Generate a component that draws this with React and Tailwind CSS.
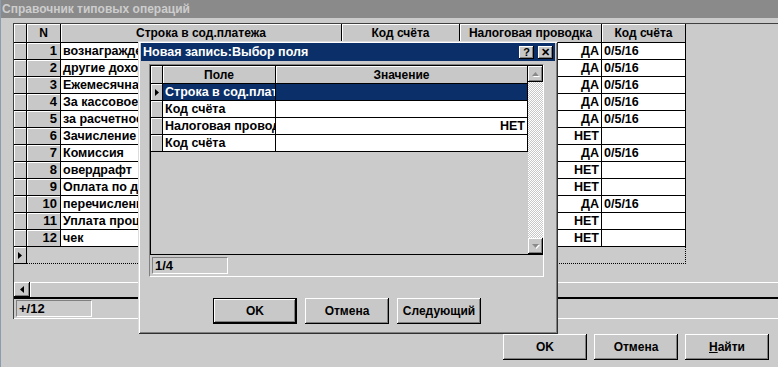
import React from "react";

const rows = [
  ["вознаграждение", "ДА", "0/5/16"],
  ["другие доходы", "ДА", "0/5/16"],
  ["Ежемесячная плата", "ДА", "0/5/16"],
  ["За кассовое обслуживание", "ДА", "0/5/16"],
  ["за расчетное обслуживание", "ДА", "0/5/16"],
  ["Зачисление процентов", "НЕТ", ""],
  ["Комиссия", "ДА", "0/5/16"],
  ["овердрафт", "НЕТ", ""],
  ["Оплата по договору", "НЕТ", ""],
  ["перечисление", "ДА", "0/5/16"],
  ["Уплата процентов", "НЕТ", ""],
  ["чек", "НЕТ", ""],
];

const drows = [
  ["Строка в сод.платежа", ""],
  ["Код счёта", ""],
  ["Налоговая проводка", "НЕТ"],
  ["Код счёта", ""],
];

const raised =
  "shadow-[inset_-1px_-1px_0_#000,inset_1px_1px_0_#fff,inset_-2px_-2px_0_#808080]";

function TriRight() {
  return (
    <svg width="4" height="7" viewBox="0 0 4 7">
      <polygon points="0,0 4,3.5 0,7" fill="#000" />
    </svg>
  );
}

function TriLeft() {
  return (
    <svg width="4" height="7" viewBox="0 0 4 7">
      <polygon points="4,0 0,3.5 4,7" fill="#000" />
    </svg>
  );
}

function TriUpGray() {
  return (
    <svg width="9" height="6" viewBox="0 0 9 6">
      <polygon points="1,5 4.5,1 8,5" fill="#ffffff" transform="translate(1,1)" />
      <polygon points="1,5 4.5,1 8,5" fill="#8a8a8a" />
    </svg>
  );
}

function TriDownGray() {
  return (
    <svg width="9" height="6" viewBox="0 0 9 6">
      <polygon points="1,1 4.5,5 8,1" fill="#ffffff" transform="translate(1,1)" />
      <polygon points="1,1 4.5,5 8,1" fill="#8a8a8a" />
    </svg>
  );
}

const grayCell =
  "bg-[#c8c8c8] border-r border-b border-black shadow-[inset_1px_1px_0_#fff]";
const whiteCell = "bg-white border-r border-b border-black";

function Button({ children, def = false, className = "" }) {
  if (def) {
    return (
      <div className={`border border-black ${className}`}>
        <div
          className={`w-full h-full bg-[#c8c8c8] ${raised} flex items-center justify-center`}
        >
          {children}
        </div>
      </div>
    );
  }
  return (
    <div
      className={`bg-[#c8c8c8] ${raised} flex items-center justify-center ${className}`}
    >
      {children}
    </div>
  );
}

function Dialog() {
  return (
    <div className="absolute left-[137px] top-[41px] w-[420px] h-[293px] bg-[#cbcbcb] shadow-[inset_1px_1px_0_#dcdcdc,inset_-1px_-1px_0_#303030,inset_2px_2px_0_#fff,inset_-2px_-2px_0_#808080] pt-[2px] px-[3px] flex flex-col">
      {/* title */}
      <div className="h-[18px] bg-[#0b2f68] flex items-center pl-[2px] pr-[2px] text-white">
        <span className="flex-1 leading-[18px] text-[12.5px]">Новая запись:Выбор поля</span>
        <div className={`w-[15px] h-[13px] bg-[#c8c8c8] ${raised} flex items-center justify-center text-black text-[11px] leading-none`}>
          ?
        </div>
        <div className={`ml-[4px] w-[15px] h-[13px] bg-[#c8c8c8] ${raised} flex items-center justify-center text-black text-[11px] leading-none`}>
          ✕
        </div>
      </div>

      {/* panel */}
      <div className="mt-[3px] ml-[8px] w-[395px] h-[213px] border border-t-[#808080] border-l-[#808080] border-b-white border-r-white flex flex-col">
        <div className="h-[190px] border-t border-l border-b border-black flex">
          <div className="w-[377px] flex flex-col">
            {/* header */}
            <div className="flex h-[18px]">
              <div className={`w-[12px] ${grayCell}`} />
              <div className={`w-[113px] ${grayCell} flex items-center justify-center`}>
                Поле
              </div>
              <div className={`w-[252px] ${grayCell} flex items-center justify-center`}>
                Значение
              </div>
            </div>
            {drows.map((r, i) => (
              <div key={i} className="flex h-[17px]">
                <div className={`w-[12px] ${grayCell} flex items-center justify-center`}>
                  {i === 0 ? <TriRight /> : null}
                </div>
                <div
                  className={`w-[113px] border-r border-b border-black pl-[2px] overflow-hidden whitespace-nowrap leading-[16px] text-[12.5px] ${
                    i === 0 ? "bg-[#0b2f68] text-white" : "bg-white"
                  }`}
                >
                  {r[0]}
                </div>
                <div
                  className={`w-[252px] border-r border-b border-black pr-[2px] text-right leading-[16px] text-[12.5px] ${
                    i === 0 ? "bg-[#0b2f68] text-white" : "bg-white"
                  }`}
                >
                  {r[1]}
                </div>
              </div>
            ))}
          </div>
          {/* vertical scrollbar */}
          <div className="w-[15px] flex flex-col">
            <div className={`h-[16px] bg-[#c8c8c8] ${raised} flex items-center justify-center`}>
              <TriUpGray />
            </div>
            <div className="flex-1 bg-[image:repeating-conic-gradient(#c8c8c8_0_25%,#ffffff_0_50%)] bg-[length:2px_2px]" />
            <div className={`h-[16px] bg-[#c8c8c8] ${raised} flex items-center justify-center`}>
              <TriDownGray />
            </div>
          </div>
        </div>
        <div className="flex-1 pt-[2px] pl-[2px]">
          <div className="w-[76px] h-[17px] border border-t-[#808080] border-l-[#808080] border-b-white border-r-white pl-[2px] leading-[15px] text-[13px]">
            1/4
          </div>
        </div>
      </div>

      {/* buttons */}
      <div className="mt-[21px] flex justify-center gap-[8px] pr-[2px]">
        <Button def className="w-[84px] h-[26px]">OK</Button>
        <Button className="w-[84px] h-[26px]">Отмена</Button>
        <Button className="w-[84px] h-[26px]">Следующий</Button>
      </div>
    </div>
  );
}

export default function App() {
  return (
    <div className="w-[778px] h-[367px] bg-[#cbcbcb] relative overflow-hidden flex flex-col border-l border-[#8c9cb0] font-[family-name:'Liberation_Sans',Arial,sans-serif] font-bold text-[12px] text-black">
      {/* title bar */}
      <div className="h-[18px] bg-[#8a8a8a] text-[#cdcdcd] pl-[1px] leading-[18px] text-[12px] shrink-0">
        Справочник типовых операций
      </div>

      {/* main panel */}
      <div className="mt-[5px] ml-[12px] border-l border-t border-[#404040] flex flex-col shrink-0 w-[900px]">
        {/* header */}
        <div className="flex h-[19px]">
          <div className={`w-[13px] ${grayCell}`} />
          <div className={`w-[34px] ${grayCell} flex items-center justify-center`}>N</div>
          <div className={`w-[281px] ${grayCell} flex items-center justify-center`}>
            Строка в сод.платежа
          </div>
          <div className={`w-[118px] ${grayCell} flex items-center justify-center`}>
            Код счёта
          </div>
          <div className={`w-[142px] ${grayCell} flex items-center justify-center`}>
            Налоговая проводка
          </div>
          <div className={`w-[84px] ${grayCell} flex items-center justify-center`}>
            Код счёта
          </div>
        </div>
        {rows.map((r, i) => (
          <div key={i} className="flex h-[17px]">
            <div className={`w-[13px] ${grayCell}`} />
            <div className={`w-[34px] ${grayCell} text-right pr-[3px] leading-[16px] text-[13px]`}>
              {i + 1}
            </div>
            <div className={`w-[281px] ${whiteCell} pl-[2px] overflow-hidden whitespace-nowrap leading-[16px] text-[12.5px]`}>
              {r[0]}
            </div>
            <div className={`w-[118px] ${whiteCell}`} />
            <div className={`w-[142px] ${whiteCell} text-right pr-[2px] leading-[16px] text-[12.5px]`}>
              {r[1]}
            </div>
            <div className={`w-[84px] ${whiteCell} pl-[2px] leading-[16px] text-[12.5px]`}>{r[2]}</div>
          </div>
        ))}
        {/* new row */}
        <div className="flex h-[17px]">
          <div className="w-[13px] bg-[#c8c8c8] border-r border-b border-black shadow-[inset_1px_1px_0_#fff] flex items-center justify-center">
            <TriRight />
          </div>
          <div className="w-[659px] border-r border-b border-dotted border-black" />
        </div>
        {/* horizontal scrollbar */}
        <div className="mt-[18px] flex h-[15px]">
          <div className={`w-[16px] bg-[#c8c8c8] ${raised} flex items-center justify-center`}>
            <TriLeft />
          </div>
          <div className="flex-1 bg-[#c8c8c8] shadow-[inset_1px_1px_0_#fff]" />
        </div>
        <div className="h-[2px] bg-black" />
        {/* status */}
        <div className="h-[20px] border-b border-white pt-[1px] pl-[2px]">
          <div className="w-[76px] h-[17px] border border-t-[#808080] border-l-[#808080] border-b-white border-r-white pl-[2px] leading-[15px] text-[13px]">
            +/12
          </div>
        </div>
      </div>

      {/* bottom buttons */}
      <div className="mt-[15px] flex justify-end gap-[7px] pr-[9px]">
        <Button className="w-[84px] h-[26px]">OK</Button>
        <Button className="w-[84px] h-[26px]">Отмена</Button>
        <Button className="w-[84px] h-[26px]">
          <span>
            <span className="underline">Н</span>айти
          </span>
        </Button>
      </div>

      <Dialog />
    </div>
  );
}
